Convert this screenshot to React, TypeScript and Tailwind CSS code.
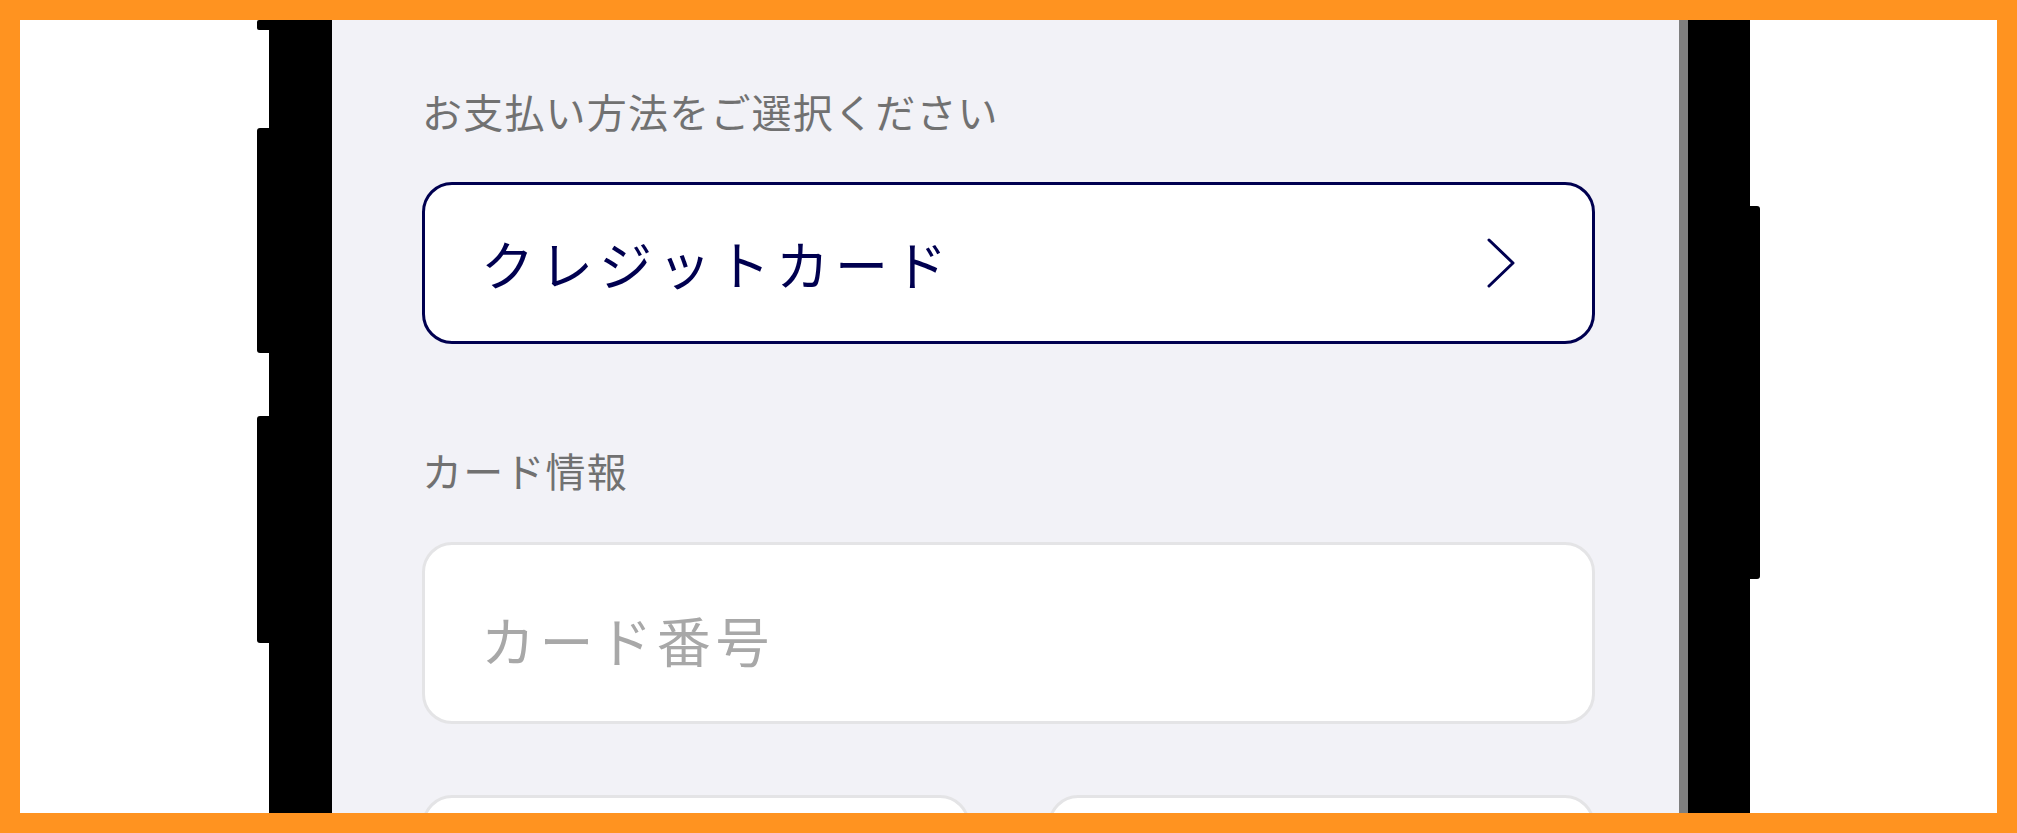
const NAVY = 'text-[#000050]';

function SideButtons() {
  return (
    <div className="flex w-[12px] flex-col">
      <div className="h-[10px] rounded-l-[2px] bg-black" />
      <div className="mt-[98px] h-[225px] rounded-l-[3px] bg-black" />
      <div className="mt-[63px] h-[227px] rounded-l-[3px] bg-black" />
    </div>
  );
}

function CardField({ placeholder }: { placeholder?: string }) {
  return (
    <div className="flex h-[182px] items-center rounded-[30px] border-[3px] border-[#e4e4e6] bg-white pl-[56px] pt-[14px]">
      {placeholder && (
        <span className="text-[54px] leading-none tracking-[4.6px] text-[#a8a8a8]">{placeholder}</span>
      )}
    </div>
  );
}

export default function App() {
  return (
    <div
      className="flex h-[833px] w-full justify-center overflow-hidden border-[20px] border-[#ff9320] bg-white"
      style={{ fontFamily: '"Noto Sans CJK JP", "Noto Sans", sans-serif' }}
    >
      <div className="flex h-full">
        <SideButtons />
        <div className="flex h-full">
          <div className="w-[63px] bg-black" />
          <div className="w-[1347px] bg-[#f2f2f7] pl-[90px] pr-[84px] pt-[71px]">
            <p className="text-[40px] leading-[40px] tracking-[1.2px] text-[#717171]">
              お支払い方法をご選択ください
            </p>

            <button className="mt-[51px] flex h-[162px] w-full items-center justify-between rounded-[30px] border-[3px] border-[#000050] bg-white pl-[56px] pr-[76px]">
              <span className={`text-[53px] leading-none tracking-[6px] ${NAVY}`}>クレジットカード</span>
              <svg width="30" height="50" viewBox="0 0 30 50" fill="none" className={NAVY}>
                <path d="M3 2 L27 25 L3 48" stroke="currentColor" strokeWidth="3" strokeLinecap="round" strokeLinejoin="round" />
              </svg>
            </button>

            <p className="mt-[106px] text-[40px] leading-[40px] tracking-[1.2px] text-[#717171]">カード情報</p>

            <div className="mt-[52px]">
              <CardField placeholder="カード番号" />
            </div>

            <div className="mt-[71px] grid grid-cols-2 gap-[78px]">
              <CardField />
              <CardField />
            </div>
          </div>
          <div className="w-[9px] bg-[#7f7f7f]" />
          <div className="w-[62px] bg-black" />
        </div>
        <div className="flex w-[10px] flex-col">
          <div className="mt-[186px] h-[373px] rounded-r-[3px] bg-black" />
        </div>
      </div>
    </div>
  );
}
